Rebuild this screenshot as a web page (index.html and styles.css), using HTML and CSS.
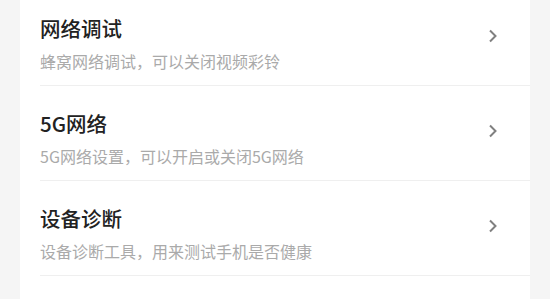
FILE: index.html
```html
<!DOCTYPE html>
<html lang="zh-CN">
<head>
    <meta charset="UTF-8">
    <meta name="viewport" content="width=device-width, initial-scale=1.0">
    <title>网络设置</title>
    <link rel="stylesheet" href="styles.css">
</head>
<body>
    <div class="card">
        <div class="item">
            <div class="text">
                <div class="title">网络调试</div>
                <div class="desc">蜂窝网络调试，可以关闭视频彩铃</div>
            </div>
            <svg class="arrow" viewBox="0 0 10 14"><path d="M2 1.5 L7.5 7 L2 12.5" /></svg>
        </div>
        <div class="item">
            <div class="text">
                <div class="title">5G网络</div>
                <div class="desc">5G网络设置，可以开启或关闭5G网络</div>
            </div>
            <svg class="arrow" viewBox="0 0 10 14"><path d="M2 1.5 L7.5 7 L2 12.5" /></svg>
        </div>
        <div class="item">
            <div class="text">
                <div class="title">设备诊断</div>
                <div class="desc">设备诊断工具，用来测试手机是否健康</div>
            </div>
            <svg class="arrow" viewBox="0 0 10 14"><path d="M2 1.5 L7.5 7 L2 12.5" /></svg>
        </div>
    </div>
</body>
</html>
```

FILE: styles.css
```css
body {
    margin: 0;
    padding: 0 20px;
    background: #f5f5f5;
    font-family: "Noto Sans CJK SC", "Noto Sans", sans-serif;
    overflow: hidden;
}
.card {
    background: #fff;
    margin-top: -9px;
    padding-left: 20px;
    min-height: 320px;
}
.item {
    display: flex;
    align-items: center;
    height: 95px;
    box-sizing: border-box;
    border-bottom: 1px solid #efefef;
    padding-top: 10px;
    padding-right: 32px;
}
.text {
    flex: 1;
}
.title {
    font-size: 20.5px;
    line-height: 26px;
    font-weight: 500;
    color: #222;
}
.desc {
    margin-top: 10px;
    font-size: 16px;
    line-height: 20px;
    color: #aaa;
}
.arrow {
    width: 10px;
    height: 14px;
    fill: none;
    stroke: #808080;
    stroke-width: 2;
    margin-top: -14px;
}
```
